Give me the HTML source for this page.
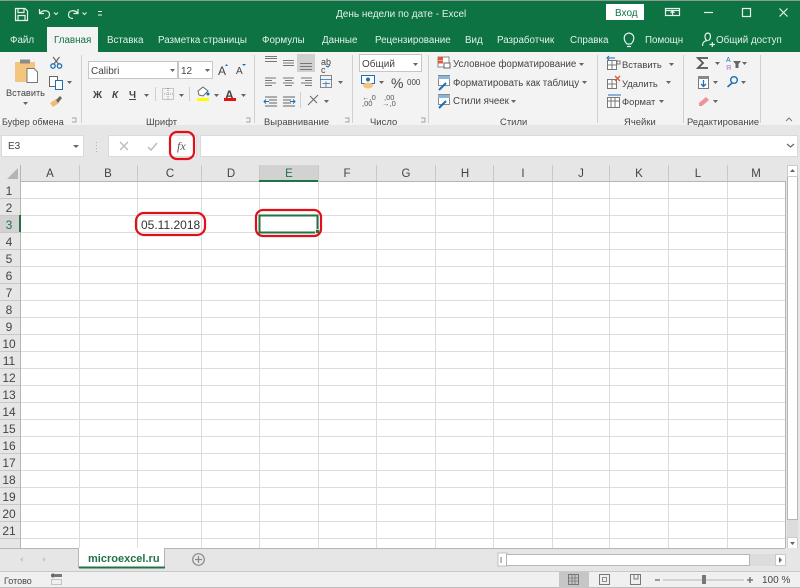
<!DOCTYPE html>
<html><head><meta charset="utf-8"><style>
html,body{margin:0;padding:0;width:800px;height:588px;overflow:hidden;background:#e6e6e6}
body{position:relative;font-family:"Liberation Sans",sans-serif;font-size:10px;color:#444;filter:blur(.3px)}
.t{position:absolute;white-space:nowrap;line-height:12px}
.w{color:#e4f1ea;font-size:9.8px}
.l{font-size:9.4px;letter-spacing:.05px}
.c{transform:translateX(-50%)}
.b{position:absolute}
svg{position:absolute;left:0;top:0}
.h{font-size:11.5px;color:#444;line-height:14px}
.r{font-size:12px;color:#444;line-height:14px}
</style></head><body>
<div class="b" style="left:0;top:0;width:800px;height:52px;background:#0d7343;border-top:1px solid #8a9a92;box-sizing:border-box"></div>
<div class="b" style="left:0;top:52px;width:800px;height:73px;background:#f3f3f3"></div>
<div class="b" style="left:47px;top:27px;width:51px;height:26px;background:#f3f3f3"></div>
<div class="b" style="left:606px;top:4px;width:38px;height:16px;background:#fff"></div>

<span class="t w" style="left:10px;top:35px">Файл</span>
<span class="t" style="left:54px;top:35px;color:#0d7343;font-size:9.8px">Главная</span>
<span class="t w" style="left:107px;top:35px">Вставка</span>
<span class="t w" style="left:158px;top:35px">Разметка страницы</span>
<span class="t w" style="left:262px;top:35px">Формулы</span>
<span class="t w" style="left:322px;top:35px">Данные</span>
<span class="t w" style="left:375px;top:35px">Рецензирование</span>
<span class="t w" style="left:465px;top:35px">Вид</span>
<span class="t w" style="left:497px;top:35px">Разработчик</span>
<span class="t w" style="left:570px;top:35px">Справка</span>
<span class="t w" style="left:645px;top:35px">Помощн</span>
<span class="t w" style="left:716px;top:35px">Общий доступ</span>
<span class="t w" style="left:336px;top:9px;font-size:10px">День недели по дате  -  Excel</span>
<span class="t" style="left:615px;top:8px;color:#0d7343">Вход</span>

<span class="t" style="left:6px;top:87px;font-size:9.2px">Вставить</span>
<span class="t l" style="left:2px;top:116px;font-size:9px">Буфер обмена</span>
<span class="t l" style="left:146px;top:116px">Шрифт</span>
<span class="t l" style="left:264px;top:116px">Выравнивание</span>
<span class="t l" style="left:370px;top:116px">Число</span>
<span class="t l" style="left:500px;top:116px">Стили</span>
<span class="t l" style="left:624px;top:116px">Ячейки</span>
<span class="t l" style="left:687px;top:116px">Редактирование</span>

<div class="b" style="left:88px;top:61px;width:90px;height:18px;background:#fff;border:1px solid #c6c6c6;box-sizing:border-box"></div>
<div class="b" style="left:178px;top:61px;width:35px;height:18px;background:#fff;border:1px solid #c6c6c6;box-sizing:border-box"></div>
<span class="t" style="left:91px;top:66px">Calibri</span>
<span class="t" style="left:181px;top:66px">12</span>
<span class="t" style="left:218px;top:65px;font-size:12px">A</span>
<span class="t" style="left:236px;top:66px;font-size:10px">A</span>
<span class="t" style="left:93px;top:90px;font-weight:bold">Ж</span>
<span class="t" style="left:112px;top:90px;font-weight:bold;font-style:italic">К</span>
<span class="t" style="left:129px;top:90px;font-weight:bold;text-decoration:underline">Ч</span>
<span class="t" style="left:225px;top:89px;font-weight:bold;font-size:12px">A</span>

<div class="b" style="left:359px;top:54px;width:63px;height:18px;background:#fff;border:1px solid #c6c6c6;box-sizing:border-box"></div>
<span class="t" style="left:362px;top:59px">Общий</span>
<span class="t" style="left:391px;top:77px;font-size:14px">%</span>
<span class="t" style="left:407px;top:77px;font-size:8px;">000</span>
<span class="t" style="left:321px;top:58px;font-size:9px;line-height:8px">ab<br>c</span>
<span class="t" style="left:453px;top:59px;font-size:9.7px">Условное форматирование</span>
<span class="t" style="left:453px;top:78px;font-size:9.7px">Форматировать как таблицу</span>
<span class="t" style="left:453px;top:96px;font-size:9.7px">Стили ячеек</span>
<span class="t" style="left:622px;top:59px;font-size:9.4px">Вставить</span>
<span class="t" style="left:622px;top:78px;font-size:9.4px">Удалить</span>
<span class="t" style="left:622px;top:96px;font-size:9.4px">Формат</span>

<div class="b" style="left:1px;top:135px;width:83px;height:22px;background:#fff;border:1px solid #dadada;box-sizing:border-box"></div>
<span class="t" style="left:8px;top:141px">E3</span>
<div class="b" style="left:108px;top:135px;width:89px;height:22px;background:#fff;border:1px solid #dadada;box-sizing:border-box"></div>
<div class="b" style="left:200px;top:135px;width:598px;height:22px;background:#fff;border:1px solid #dadada;box-sizing:border-box"></div>
<span class="t" style="left:177px;top:139px;font:italic 12px 'Liberation Serif',serif;line-height:14px;color:#555">fx</span>

<div class="b" style="left:20px;top:181px;width:765px;height:367px;background:#fff"></div>
<div class="b" style="left:0;top:165px;width:20px;height:383px;background:#e6e6e6"></div>
<div class="b" style="left:259px;top:165px;width:59px;height:16px;background:#d2d2d2"></div>
<div class="b" style="left:0;top:215px;width:20px;height:17px;background:#d2d2d2"></div>

<svg width="800" height="588" viewBox="0 0 800 588">
<g stroke="#dcdcdc" stroke-width="1">
<path d="M20.5 181V548M79.5 181V548M137.5 181V548M201.5 181V548M259.5 181V548M318.5 181V548M376.5 181V548M435.5 181V548M493.5 181V548M552.5 181V548M609.5 181V548M668.5 181V548M727.5 181V548"/>
<path d="M20 198.5H785M20 215.5H785M20 232.5H785M20 249.5H785M20 266.5H785M20 283.5H785M20 300.5H785M20 317.5H785M20 334.5H785M20 351.5H785M20 368.5H785M20 385.5H785M20 402.5H785M20 419.5H785M20 436.5H785M20 453.5H785M20 470.5H785M20 487.5H785M20 504.5H785M20 521.5H785M20 538.5H785"/>
</g>
<path d="M79.5 165V181M137.5 165V181M201.5 165V181M259.5 165V181M318.5 165V181M376.5 165V181M435.5 165V181M493.5 165V181M552.5 165V181M609.5 165V181M668.5 165V181M727.5 165V181M0 198.5H20M0 215.5H20M0 232.5H20M0 249.5H20M0 266.5H20M0 283.5H20M0 300.5H20M0 317.5H20M0 334.5H20M0 351.5H20M0 368.5H20M0 385.5H20M0 402.5H20M0 419.5H20M0 436.5H20M0 453.5H20M0 470.5H20M0 487.5H20M0 504.5H20M0 521.5H20M0 538.5H20" stroke="#c8c8c8" fill="none"/>
<path d="M20.5 165V548M785.5 181V548M20 181.5H785" stroke="#b5b5b5" fill="none"/>
<path d="M18 168V179H7Z" fill="#b5b5b5"/>
<rect x="259" y="180" width="59" height="2" fill="#217346"/>
<rect x="19" y="215" width="2" height="17" fill="#217346"/>
<rect x="259.500" y="215.500" width="58" height="17" fill="#fff" stroke="#217346" stroke-width="2"/>
<rect x="315.500" y="229.500" width="4" height="4" fill="#217346" stroke="#fff" stroke-width=".7"/>
<g fill="none" stroke="#e0101a" stroke-width="2.200">
<rect x="136" y="213" width="69" height="22" rx="8"/>
<rect x="256" y="210" width="65" height="26" rx="7"/>
<rect x="170" y="132" width="24" height="27" rx="7"/>
</g>

<!-- title icons -->
<g fill="none" stroke="#e8f3ee" stroke-width="1.200">
<path d="M15.500 8.500H25L27.500 11V20.500H15.500ZM18 8.500V12.500H24V8.500M18 20.500V15.500H25V20.500"/>
<path d="M39.500 9V13.500H44M40 13C43 9.500 50 10 49.500 15C49.300 17.500 47.500 18.500 45 18.500"/>
<path d="M78 9V13.500H73.500M77.500 13C75 9.500 68 10 68.500 15C68.700 17.500 70.500 18.500 73 18.500"/>
<path d="M98 11.500H102M98 15H102" stroke-width="1"/>
<path d="M54 12.500l2 2 2-2M82.500 12.500l2 2 2-2" stroke-width="1"/>
<rect x="665.500" y="8.500" width="14" height="7"/><path d="M665.500 10.500H679.500M672.500 15V11.500M670.500 13l2-2 2 2"/>
<path d="M704 12.500H713"/>
<rect x="742.500" y="8.500" width="8" height="8"/>
<path d="M779.500 8.500l8 8M787.500 8.500l-8 8"/>
<path d="M627 44C623 40 623 34 629 33C635 34 635 40 631 44ZM627 46.500H631"/>
<path d="M702.500 46C702.500 42 704.500 41 707 40.500C704.500 39 704 34 707.500 33C711.500 33 711 39 708.500 40.500M709.500 44.500H715M712.300 42V47"/>
</g>
<!-- clipboard -->
<rect x="15" y="62" width="20" height="20" fill="#f4c67d"/>
<rect x="20" y="59.500" width="10" height="4" fill="#8c8c8c"/>
<path d="M27 68.500H34L37.500 72V82.500H27Z" fill="#fff" stroke="#777"/>
<g fill="none" stroke="#1f6fb2" stroke-width="1.300"><circle cx="53" cy="66" r="2.200"/><circle cx="59.500" cy="66" r="2.200"/></g>
<path d="M54 64L59.500 57M58.500 64L53 57" stroke="#666" stroke-width="1.200"/>
<rect x="49.500" y="76.500" width="8" height="10" fill="#fff" stroke="#666"/><rect x="55.500" y="80.500" width="7" height="9" fill="#fff" stroke="#1f6fb2"/>
<path d="M50 103L56 99L59 103L53 107Z" fill="#f0bc70"/><path d="M56 100L60 96L62 98L58 103Z" fill="#666"/>
<!-- dropdown arrows -->
<path fill="#666" d="M23 102h5l-2.500 3zM67 81h5l-2.500 3zM170 69h5l-2.500 3zM205 69h5l-2.500 3zM144 94h5l-2.500 3zM179 94h5l-2.500 3zM214 94h5l-2.500 3zM241 94h5l-2.500 3zM413 63h5l-2.500 3zM338 81h5l-2.500 3zM379 81h5l-2.500 3zM324 100h5l-2.500 3zM579 63h5l-2.500 3zM582 81h5l-2.500 3zM511 100h5l-2.500 3zM669 63h5l-2.500 3zM666 81h5l-2.500 3zM659 100h5l-2.500 3zM715 62h5l-2.500 3zM742 62h5l-2.500 3zM713 81h5l-2.500 3zM741 81h5l-2.500 3zM713 100h5l-2.500 3z"/>
<!-- font row -->
<path d="M225 66l1.500-2 1.500 2ZM242 64h4l-2 2Z" fill="#1f6fb2"/>
<g stroke="#999" fill="none"><rect x="162.500" y="88.500" width="11" height="11" stroke-dasharray="1 1"/><path d="M168 88V100M162 94H174" stroke-dasharray="1 1"/></g>
<path d="M155.500 87V101M189.500 87V101" stroke="#cfcfcf"/>
<path d="M198 91l5-4 5 4-5 5-4-1Z" fill="#fff" stroke="#666"/><circle cx="208" cy="94" r="1.500" fill="#1f6fb2"/>
<rect x="197" y="98" width="12" height="3" fill="#ff0"/>
<rect x="224" y="98" width="12" height="3" fill="#e81010"/>
<!-- alignment -->
<rect x="297" y="54" width="18" height="18" fill="#d0d0d0"/>
<g stroke="#777" fill="none" stroke-width=".9">
<path d="M265 56.500H277M265 58.500H277M265 61.500H277"/>
<path d="M283 60.500H294M283 63H294M283 65.500H294"/>
<path d="M300 63.500H312M300 66.500H312M300 69.500H312"/>
<path d="M265 78H276M265 80.500H272M265 83H276M265 85.500H272"/>
<path d="M283 78H294M285 80.500H292M283 83H294M285 85.500H292"/>
<path d="M301 78H312M305 80.500H312M301 83H312M305 85.500H312"/>
</g>
<path d="M330 65l-2 2 -2-1" stroke="#1f6fb2" fill="none"/>
<rect x="320.500" y="75.500" width="11" height="12" fill="none" stroke="#888"/><path d="M320 79.500H332M326 81.500V87M322.500 83.500H330" stroke="#1f6fb2" stroke-width=".8"/>
<path d="M265 97H277M269 100H277M269 103H277M265 106H277M283 97H295M283 100H291M283 103H291M283 106H295" stroke="#666" stroke-width=".9"/>
<path d="M264 101.500H269M266 99.500l-2 2 2 2M290 101.500H295M293 99.500l2 2-2 2" stroke="#1f6fb2" fill="none"/>
<path d="M300.500 92V108" stroke="#d0d0d0"/>
<path d="M308 105L318 95M310 96l7 7" stroke="#666" fill="none"/>
<!-- number -->
<rect x="361.500" y="75.500" width="13" height="8" fill="#fff" stroke="#1f6fb2"/><circle cx="368" cy="79.500" r="2" fill="#1f6fb2"/><ellipse cx="368" cy="85.500" rx="5" ry="3" fill="#f4c67d"/>
<text x="362" y="100" font-size="7.500" fill="#555" font-family="Liberation Sans">←,0</text>
<text x="362" y="106" font-size="7.500" fill="#555" font-family="Liberation Sans">,00</text>
<text x="384" y="100" font-size="7.500" fill="#555" font-family="Liberation Sans">,00</text>
<text x="382" y="106" font-size="7.500" fill="#555" font-family="Liberation Sans">→,0</text>
<!-- style icons -->
<g>
<rect x="438" y="57" width="11" height="10" fill="#fff" stroke="#888"/><rect x="438" y="57" width="5" height="3" fill="#e05a3a"/><rect x="438" y="60.500" width="5" height="3" fill="#e05a3a"/><rect x="444" y="63" width="6" height="5" fill="#fff" stroke="#666"/>
<rect x="438.500" y="75.500" width="11" height="10" fill="#fff" stroke="#888"/><path d="M438 76H450V79H438Z" fill="#8ab4d8"/><path d="M439 90L446 83" stroke="#1f6fb2" stroke-width="2"/>
<rect x="438.500" y="94.500" width="11" height="10" fill="#fff" stroke="#888"/><path d="M438 95H450V98H438Z" fill="#8ab4d8"/><path d="M439 108L446 101" stroke="#1f6fb2" stroke-width="2"/>
</g>
<!-- cells icons -->
<g stroke="#777" fill="#fff">
<rect x="607.500" y="60.500" width="9" height="9"/><path d="M612 60V70M607 65H617" fill="none"/>
<rect x="607.500" y="79.500" width="9" height="9"/><path d="M612 79V89M607 84H617" fill="none"/>
<rect x="607.500" y="97.500" width="12" height="10"/><path d="M607 101H620M611 98V108M615 98V108" fill="none"/>
</g>
<path d="M607 58H615M609 56l-2 2 2 2" stroke="#1f6fb2" fill="none"/>
<rect x="617" y="61" width="3" height="3" fill="#fff" stroke="#777"/>
<path d="M615 76l5 5M620 76l-5 5" stroke="#e05a3a" stroke-width="1.400"/>
<path d="M608 95H621" stroke="#1f6fb2"/>
<!-- editing -->
<path d="M708 58H698L703 63L698 68H708" fill="none" stroke="#555" stroke-width="1.800"/>
<rect x="698.500" y="76.500" width="10" height="12" fill="#fff" stroke="#777"/><rect x="698" y="76" width="11" height="3" fill="#888"/><path d="M703.500 80V86M701 84l2.500 2.500L706 84" stroke="#1f6fb2" fill="none" stroke-width="1.300"/>
<path d="M699 103l7-6 3 3-7 6h-3Z" fill="#f0909a"/>
<text x="726" y="62" font-size="7" fill="#1f6fb2" font-family="Liberation Sans">А</text>
<text x="726" y="70" font-size="7" fill="#9a6fc0" font-family="Liberation Sans">Я</text>
<path d="M733 61H741L738.500 64V68H735.500V64Z" fill="#666"/>
<circle cx="734" cy="80" r="3.300" fill="none" stroke="#1f6fb2" stroke-width="1.400"/><path d="M732 83L727.500 87" stroke="#1f6fb2" stroke-width="1.600"/>
<!-- separators -->
<g stroke="#d0d0d0"><path d="M81.500 55V123M254.500 55V123M352.500 55V123M428.500 55V123M597.500 55V123M683.500 55V123M760.500 55V123"/></g>
<path d="M786 121l3-3 3 3" fill="none" stroke="#777"/>
<g fill="none" stroke="#888" stroke-width=".7"><path d="M72 118h4v4h-4M246 118h4v4h-4M345 118h4v4h-4M421 118h4v4h-4"/></g>
<!-- formula bar -->
<path d="M96.500 142V152" stroke="#b5b5b5" stroke-dasharray="1 2"/>
<path d="M120 142l8 8M128 142l-8 8" stroke="#bcbcbc" stroke-width="1.300"/>
<path d="M148 147l3 3 6-7" stroke="#bcbcbc" stroke-width="1.500" fill="none"/>
<path d="M73 145l3 3 3-3Z" fill="#666"/>
<path d="M787 144l3.500 3 3.500-3" stroke="#666" stroke-width="1.200" fill="none"/>
<!-- scrollbars -->
<rect x="787" y="165" width="11" height="383" fill="#dcdcdc"/>
<rect x="787.500" y="166.500" width="10" height="353" fill="#fff" stroke="#b5b5b5"/>
<rect x="787.500" y="537.500" width="10" height="11" fill="#fff" stroke="#ccc"/>
<rect x="787.500" y="165.500" width="10" height="11" fill="#fff" stroke="#ccc"/>
<path d="M790 172l2.500-3 2.500 3ZM790 542l2.500 3 2.500-3Z" fill="#666"/>
<rect x="0" y="548" width="800" height="23" fill="#e6e6e6"/>
<path d="M0 548.500H79M165 548.500H785" stroke="#b5b5b5"/>
<path d="M78.500 548V567.500H164.500V548" fill="#fff" stroke="#b5b5b5"/>
<path d="M79 567.500H165" stroke="#217346" stroke-width="2"/>
<circle cx="198.500" cy="559.500" r="5.800" fill="none" stroke="#8a8a8a" stroke-width="1.200"/><path d="M195 559.500H202M198.500 556V563" stroke="#8a8a8a" stroke-width="1.200"/>
<path d="M23 557v5l-3-2.500ZM43 557v5l3-2.500Z" fill="#c8c8c8"/>
<rect x="498" y="553" width="9" height="13" fill="#fff" stroke="#c0c0c0"/>
<rect x="506.500" y="554.500" width="243" height="11" fill="#fff" stroke="#b5b5b5"/>
<rect x="750" y="554" width="25" height="12" fill="#dcdcdc"/>
<rect x="775.500" y="554.500" width="10" height="11" fill="#fff" stroke="#c8c8c8"/>
<path d="M779 557v6l3-3Z" fill="#666"/>
<path d="M501 557v6" stroke="#777"/>
<!-- status bar -->
<rect x="0" y="571" width="800" height="17" fill="#f0f0f0"/>
<path d="M0 571.500H800" stroke="#c9c9c9"/>
<path d="M0 587.500H800" stroke="#bdbdbd"/>
<rect x="559" y="572" width="30" height="16" fill="#c6c6c6"/>
<g fill="none" stroke="#777">
<rect x="568.500" y="574.500" width="10" height="10"/><path d="M572 574V585M575 574V585M568 578H579M568 581H579" stroke-width=".8"/>
<rect x="599.500" y="574.500" width="10" height="10"/><rect x="602.500" y="577.500" width="4" height="4" stroke-width=".8"/>
<path d="M630.500 574.500H640.500V584.500H630.500ZM634 574.500V579H638V574.500"/>
</g>
<path d="M655 580H660M747 580H753M750 577V583" stroke="#666" stroke-width="1.300"/>
<path d="M663 580H744" stroke="#b5b5b5"/>
<rect x="702" y="575" width="4" height="9" fill="#777"/>
<circle cx="53" cy="575.500" r="2" fill="#666"/><rect x="55" y="574" width="7" height="3" fill="#777"/><rect x="51.500" y="579.500" width="10" height="5" fill="none" stroke="#999" stroke-dasharray="1 1"/>
</svg>

<span class="t c h" style="left:50px;top:167px">A</span>
<span class="t c h" style="left:108px;top:167px">B</span>
<span class="t c h" style="left:170px;top:167px">C</span>
<span class="t c h" style="left:231px;top:167px">D</span>
<span class="t c h" style="left:289px;top:167px;color:#217346">E</span>
<span class="t c h" style="left:347px;top:167px">F</span>
<span class="t c h" style="left:406px;top:167px">G</span>
<span class="t c h" style="left:465px;top:167px">H</span>
<span class="t c h" style="left:523px;top:167px">I</span>
<span class="t c h" style="left:581px;top:167px">J</span>
<span class="t c h" style="left:639px;top:167px">K</span>
<span class="t c h" style="left:698px;top:167px">L</span>
<span class="t c h" style="left:756px;top:167px">M</span>

<span class="t c r" style="left:9px;top:184px">1</span>
<span class="t c r" style="left:9px;top:201px">2</span>
<span class="t c r" style="left:9px;top:218px;color:#217346">3</span>
<span class="t c r" style="left:9px;top:235px">4</span>
<span class="t c r" style="left:9px;top:252px">5</span>
<span class="t c r" style="left:9px;top:269px">6</span>
<span class="t c r" style="left:9px;top:286px">7</span>
<span class="t c r" style="left:9px;top:303px">8</span>
<span class="t c r" style="left:9px;top:320px">9</span>
<span class="t c r" style="left:9px;top:337px">10</span>
<span class="t c r" style="left:9px;top:354px">11</span>
<span class="t c r" style="left:9px;top:371px">12</span>
<span class="t c r" style="left:9px;top:388px">13</span>
<span class="t c r" style="left:9px;top:405px">14</span>
<span class="t c r" style="left:9px;top:422px">15</span>
<span class="t c r" style="left:9px;top:439px">16</span>
<span class="t c r" style="left:9px;top:456px">17</span>
<span class="t c r" style="left:9px;top:473px">18</span>
<span class="t c r" style="left:9px;top:490px">19</span>
<span class="t c r" style="left:9px;top:507px">20</span>
<span class="t c r" style="left:9px;top:524px">21</span>

<span class="t" style="left:141px;top:218px;font-size:12px;line-height:14px;color:#333">05.11.2018</span>
<span class="t" style="left:88px;top:553px;font-size:11px;font-weight:bold;color:#217346">microexcel.ru</span>
<span class="t" style="left:4px;top:575px;font-size:9px">Готово</span>
<span class="t" style="left:762px;top:575px;font-size:10px">100 %</span>
</body></html>
